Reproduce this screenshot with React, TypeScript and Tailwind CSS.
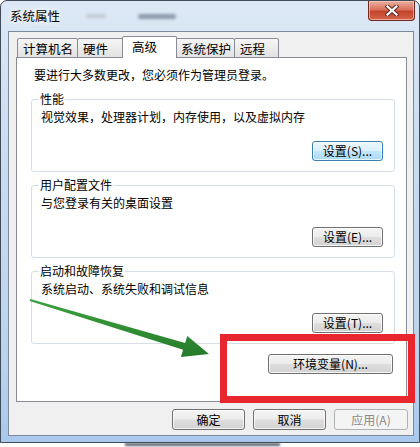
import React from "react";

type BtnKind = "normal" | "focus" | "disabled";

function Btn({ children, cls, kind = "normal" }: { children: React.ReactNode; cls: string; kind?: BtnKind }) {
  const base = "flex items-center justify-center rounded-[3px] border text-[12px] leading-none";
  const k =
    kind === "focus"
      ? "border-[#3c7fb1] bg-[linear-gradient(180deg,#ecf7fd_0%,#dbf1fc_48%,#c1e6fb_52%,#a9daf6_100%)] shadow-[inset_0_0_0_1px_rgba(255,255,255,0.7)] text-black"
      : kind === "disabled"
      ? "border-[#adb2b5] bg-[#f4f4f4] text-[#8a8a8a]"
      : "border-[#707070] bg-[linear-gradient(180deg,#f4f4f4_0%,#ececec_48%,#dedede_52%,#d2d2d2_100%)] shadow-[inset_0_0_0_1px_rgba(255,255,255,0.75)] text-black";
  return <div className={`${base} ${k} ${cls}`}>{children}</div>;
}

function Group({ title, desc, button, kind }: { title: string; desc: string; button: string; kind?: BtnKind }) {
  return (
    <fieldset className="flex flex-col rounded-[3px] border border-[#d5dfe5] pl-[9px] pr-[11px] pb-[10px]">
      <legend className="-ml-[2px] px-[1px] text-[12px] leading-[16px]">{title}</legend>
      <div className="mt-[2px] text-[12px] leading-[16px]">{desc}</div>
      <div className="mt-[16px] flex justify-end">
        <Btn cls="w-[71px] h-[20px]" kind={kind}>
          {button}
        </Btn>
      </div>
    </fieldset>
  );
}

const tabBase = "flex h-[20px] items-center border border-[#898c95] rounded-t-[2px] pt-[2px] text-[12.5px] bg-[linear-gradient(180deg,#f5f5f5_0%,#ececec_50%,#e2e2e2_100%)]";

export default function App() {
  return (
    <div className="relative h-[447px] w-[420px] overflow-hidden bg-white text-black font-['Noto_Sans_CJK_SC','Noto_Sans',sans-serif]">
      <div className="flex h-[443px] flex-col rounded-t-[7px] border border-[#3f4b58] bg-[linear-gradient(180deg,#dce8f5_0%,#cbdcf0_35%,#bcd3ed_80%,#a9c9ec_100%)]">
        {/* title bar */}
        <div className="flex h-[30px] items-start">
          <div className="flex h-[30px] items-center pl-[9px]">
            <span className="text-[12.5px] leading-none [text-shadow:0_0_6px_#ffffff,0_0_10px_#ffffff]">系统属性</span>
            <span className="ml-[26px] h-[4px] w-[20px] rounded-full bg-[#c3cad3] blur-[1.5px]" />
            <span className="ml-[32px] h-[5px] w-[38px] rounded-full bg-[#8d9aab] blur-[1.5px]" />
          </div>
          <div className="ml-auto mr-[4px] flex h-[20px] w-[47px] items-center justify-center rounded-b-[4px] border border-t-0 border-[#6e2a20] bg-[linear-gradient(180deg,#eab0a2_0%,#d9725c_45%,#c5432c_55%,#d4664b_100%)] shadow-[inset_0_0_0_1px_rgba(255,210,200,0.6)]">
            <svg width="14" height="11" viewBox="0 0 14 11">
              <path d="M2.5 1.5 L11.5 9.5 M11.5 1.5 L2.5 9.5" stroke="#5a2a22" strokeWidth="4.2" strokeLinecap="square" fill="none" />
              <path d="M2.5 1.5 L11.5 9.5 M11.5 1.5 L2.5 9.5" stroke="#ffffff" strokeWidth="2.2" strokeLinecap="square" fill="none" />
            </svg>
          </div>
        </div>

        {/* client area */}
        <div className="ml-[7px] mr-[5px] flex h-[405px] flex-col border border-[#7b8a9b] bg-[#f0f0f0] pt-[4px] pb-[5px]">
          {/* tabs */}
          <div className="relative z-10 -mb-px ml-[8px] flex h-[22px] items-end">
            <div className={`${tabBase} w-[61px] pl-[5px]`}>计算机名</div>
            <div className={`${tabBase} -ml-px w-[47px] pl-[5px]`}>硬件</div>
            <div className="relative z-10 -ml-[2px] flex h-[22px] w-[55px] items-center rounded-t-[2px] border border-b-0 border-[#898c95] bg-white pl-[9px] text-[12.5px]">
              高级
            </div>
            <div className={`${tabBase} -ml-[2px] w-[60px] pl-[5px]`}>系统保护</div>
            <div className={`${tabBase} -ml-px w-[45px] pl-[5px]`}>远程</div>
          </div>

          {/* panel */}
          <div className="ml-[7px] mr-[6px] flex h-[345px] flex-col border border-[#898c95] bg-white pl-[14px] pr-[11px] pt-[9px]">
            <div className="ml-[3px] text-[12px] leading-[16px]">要进行大多数更改，您必须作为管理员登录。</div>
            <div className="mt-[8px]">
              <Group title="性能" desc="视觉效果，处理器计划，内存使用，以及虚拟内存" button="设置(S)..." kind="focus" />
            </div>
            <div className="mt-[5px]">
              <Group title="用户配置文件" desc="与您登录有关的桌面设置" button="设置(E)..." />
            </div>
            <div className="mt-[5px]">
              <Group title="启动和故障恢复" desc="系统启动、系统失败和调试信息" button="设置(T)..." />
            </div>
            <div className="mt-[10px] flex justify-end pr-[2px]">
              <Btn cls="w-[125px] h-[20px]">环境变量(N)...</Btn>
            </div>
          </div>

          {/* bottom buttons */}
          <div className="mt-[7px] flex justify-end gap-[8px] pr-[5px]">
            <Btn cls="w-[73px] h-[21px]">确定</Btn>
            <Btn cls="w-[73px] h-[21px]">取消</Btn>
            <Btn cls="w-[74px] h-[21px]" kind="disabled">应用(A)</Btn>
          </div>
        </div>
      </div>
      <div className="flex h-[4px]">
        <span className="ml-[125px] h-[3px] w-[155px] bg-[#5b6470] blur-[1px]" />
      </div>

      {/* annotation: red box */}
      <div className="pointer-events-none absolute left-[220px] top-[334px] h-[69px] w-[195px] border-[7px] border-[#e8262d]" />

      {/* annotation: green arrow */}
      <svg className="pointer-events-none absolute left-0 top-0" width="420" height="447" viewBox="0 0 420 447">
        <defs>
          <linearGradient id="ag" x1="0" y1="0" x2="0" y2="1">
            <stop offset="0" stopColor="#3da23f" />
            <stop offset="1" stopColor="#267a2a" />
          </linearGradient>
        </defs>
        <polygon
          points="30.3,298.9 185.1,343.1 187.3,336.0 209,354 180.9,357.0 183.1,349.8 29.7,301.1"
          fill="url(#ag)"
        />
      </svg>
    </div>
  );
}
